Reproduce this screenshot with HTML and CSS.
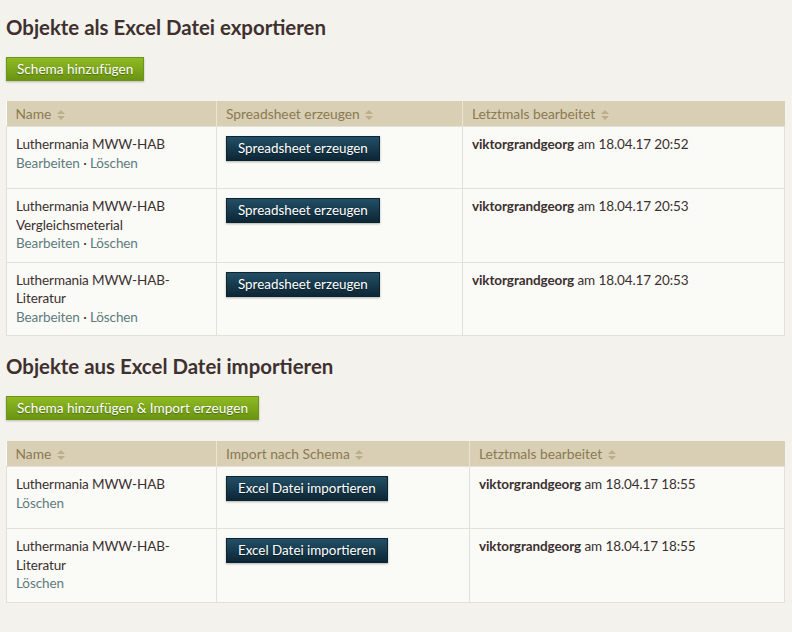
FILE: index.html
```html
<!DOCTYPE html>
<html lang="de">
<head>
<meta charset="utf-8">
<title>Excel</title>
<link rel="stylesheet" href="styles.css">
</head>
<body>
<section class="block">
  <h2 class="title">Objekte als Excel Datei exportieren</h2>
  <a class="btn-green">Schema hinzufügen</a>
  <table class="grid">
    <colgroup><col class="c1"><col class="c2a"><col></colgroup>
    <thead>
      <tr>
        <th>Name <svg class="sort" viewBox="0 0 8 10"><path d="M0 4L4 0L8 4Z M0 6L4 10L8 6Z"/></svg></th>
        <th>Spreadsheet erzeugen <svg class="sort" viewBox="0 0 8 10"><path d="M0 4L4 0L8 4Z M0 6L4 10L8 6Z"/></svg></th>
        <th>Letztmals bearbeitet <svg class="sort" viewBox="0 0 8 10"><path d="M0 4L4 0L8 4Z M0 6L4 10L8 6Z"/></svg></th>
      </tr>
    </thead>
    <tbody>
      <tr>
        <td>Luthermania MWW-HAB<br><a class="lnk">Bearbeiten</a> · <a class="lnk">Löschen</a></td>
        <td><a class="btn-dark">Spreadsheet erzeugen</a></td>
        <td><b>viktorgrandgeorg</b> am 18.04.17 20:52</td>
      </tr>
      <tr>
        <td>Luthermania MWW-HAB<br>Vergleichsmeterial<br><a class="lnk">Bearbeiten</a> · <a class="lnk">Löschen</a></td>
        <td><a class="btn-dark">Spreadsheet erzeugen</a></td>
        <td><b>viktorgrandgeorg</b> am 18.04.17 20:53</td>
      </tr>
      <tr>
        <td>Luthermania MWW-HAB-<br>Literatur<br><a class="lnk">Bearbeiten</a> · <a class="lnk">Löschen</a></td>
        <td><a class="btn-dark">Spreadsheet erzeugen</a></td>
        <td><b>viktorgrandgeorg</b> am 18.04.17 20:53</td>
      </tr>
    </tbody>
  </table>
</section>
<section class="block">
  <h2 class="title">Objekte aus Excel Datei importieren</h2>
  <a class="btn-green">Schema hinzufügen &amp; Import erzeugen</a>
  <table class="grid">
    <colgroup><col class="c1"><col class="c2b"><col></colgroup>
    <thead>
      <tr>
        <th>Name <svg class="sort" viewBox="0 0 8 10"><path d="M0 4L4 0L8 4Z M0 6L4 10L8 6Z"/></svg></th>
        <th>Import nach Schema <svg class="sort" viewBox="0 0 8 10"><path d="M0 4L4 0L8 4Z M0 6L4 10L8 6Z"/></svg></th>
        <th>Letztmals bearbeitet <svg class="sort" viewBox="0 0 8 10"><path d="M0 4L4 0L8 4Z M0 6L4 10L8 6Z"/></svg></th>
      </tr>
    </thead>
    <tbody>
      <tr>
        <td>Luthermania MWW-HAB<br><a class="lnk">Löschen</a></td>
        <td><a class="btn-dark">Excel Datei importieren</a></td>
        <td><b>viktorgrandgeorg</b> am 18.04.17 18:55</td>
      </tr>
      <tr>
        <td>Luthermania MWW-HAB-<br>Literatur<br><a class="lnk">Löschen</a></td>
        <td><a class="btn-dark">Excel Datei importieren</a></td>
        <td><b>viktorgrandgeorg</b> am 18.04.17 18:55</td>
      </tr>
    </tbody>
  </table>
</section>
</body>
</html>
```
FILE: styles.css
```css
html, body { margin: 0; padding: 0; }
body {
  background: #f3f2ec;
  font-family: Lato, "Open Sans", sans-serif;
  color: #3a3030;
  font-size: 13.5px;
  padding: 0 6px;
}
.block { padding-top: 14px; }
.block + .block { padding-top: 17px; }
.title {
  margin: 0 0 17px 0;
  font-size: 20.4px;
  line-height: 26px;
  font-weight: 700;
  color: #3f3030;
}
.btn-green {
  display: inline-block;
  height: 22px;
  line-height: 22px;
  padding: 0 10px;
  color: #fff;
  font-size: 13.6px;
  background: linear-gradient(#8fba24, #6b9412);
  border: 1px solid #6e9419;
  box-shadow: 0 1px 2px rgba(0,0,0,0.25);
  text-shadow: 0 1px 1px rgba(0,0,0,0.35);
  margin-bottom: 20px;
}
.block + .block .btn-green { margin-bottom: 21px; }
.grid {
  width: 779px;
  border-collapse: collapse;
  table-layout: fixed;
  background: #fafaf6;
}
.c1 { width: 210px; }
.c2a { width: 246px; }
.c2b { width: 253px; }
.grid th {
  background: #d9cfb5;
  color: #8a7a52;
  font-weight: 400;
  text-align: left;
  height: 25px;
  padding: 0 9px;
  font-size: 13.8px;
  border-left: 1px solid #eae4d4;
}
.grid th:first-child { border-left: none; }
.sort {
  display: inline-block;
  width: 8px;
  height: 10px;
  vertical-align: -1px;
  margin-left: 2px;
  fill: #bcae8a;
}
.grid td {
  vertical-align: top;
  padding: 8px 9px 9px 9px;
  line-height: 18.5px;
  border: 1px solid #e3e0d7;
  height: 44px;
  letter-spacing: -0.1px;
}
.lnk { color: #5e7a7e; }
.grid b { font-weight: 700; color: #3a3030; }
.btn-dark {
  display: inline-block;
  margin-top: 1px;
  height: 23px;
  line-height: 23px;
  padding: 0 11px;
  color: #fff;
  font-size: 13.4px;
  letter-spacing: 0;
  background: linear-gradient(#234f66, #0c2635);
  border: 1px solid #0c2533;
  box-shadow: 0 1px 2px rgba(0,0,0,0.3);
  text-shadow: 0 1px 1px rgba(0,0,0,0.4);
}
```
